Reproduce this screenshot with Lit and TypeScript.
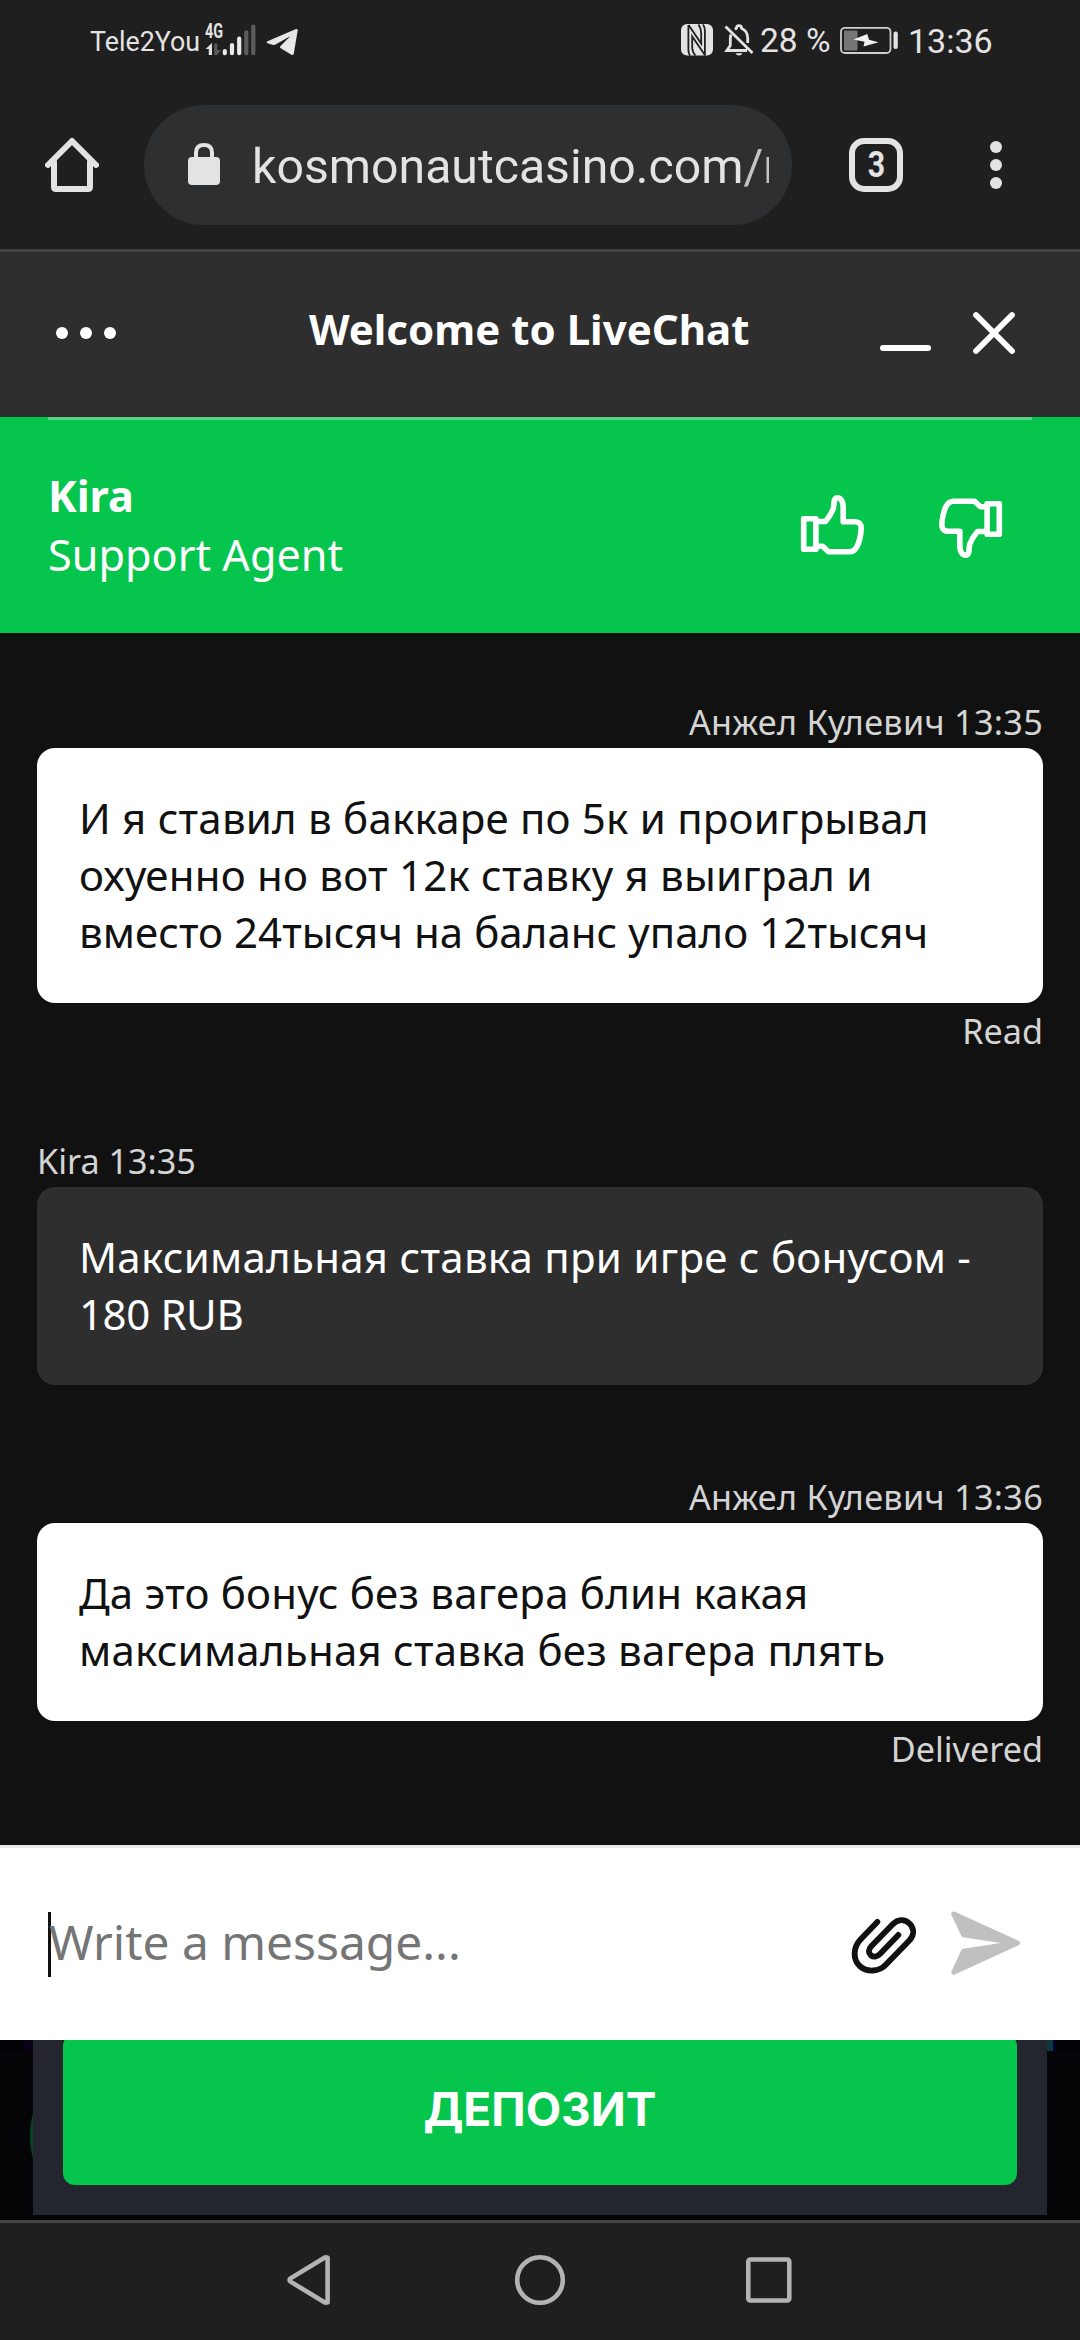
import { LitElement, html, css, svg, nothing } from "lit";
import { customElement, property } from "lit/decorators.js";
import { styleMap } from "lit/directives/style-map.js";

interface Line {
  text: string;
  /** Letter spacing in px. */
  track: number;
}

interface Message {
  own: boolean;
  author: Line;
  lines: Line[];
  status?: string;
}

const MESSAGES: Message[] = [
  {
    own: true,
    author: { text: "Анжел Кулевич 13:35", track: 0.3 },
    lines: [
      { text: "И я ставил в баккаре по 5к и проигрывал", track: 0.21 },
      { text: "охуенно но вот 12к ставку я выиграл и", track: 0.22 },
      { text: "вместо 24тысяч на баланс упало 12тысяч", track: 0.04 },
    ],
    status: "Read",
  },
  {
    own: false,
    author: { text: "Kira 13:35", track: 0 },
    lines: [
      { text: "Максимальная ставка при игре с бонусом -", track: 0.26 },
      { text: "180 RUB", track: -0.4 },
    ],
  },
  {
    own: true,
    author: { text: "Анжел Кулевич 13:36", track: 0.3 },
    lines: [
      { text: "Да это бонус без вагера блин какая", track: 0.23 },
      { text: "максимальная ставка без вагера плять", track: 0.21 },
    ],
    status: "Delivered",
  },
];

const spacing = (line: Line) => styleMap({ letterSpacing: `${line.track}px` });

const thumb = svg`
  <rect x="803.7" y="518.7" width="12.2" height="30.6" />
  <path d="M817 521.5 H825.5 C829 517.5 831.5 513 833 509.5 C834.2 506 833.6 502.5 834.5 500 C835.5 497.4 838.6 497.3 840.3 498.8 C842.3 500.7 843.2 504 843.2 507.5 V521.7 H854 C859.5 521.7 861.5 524.5 861.2 529 C860.8 535.5 859.5 541.5 857 546.5 C855 550.5 852.5 551.8 849.5 551.8 H828.5 L822.6 546.3 H817" />
`;

@customElement("status-bar")
class StatusBar extends LitElement {
  static styles = css`
    :host {
      display: flex;
      height: 90px;
      color: #e3e3e3;
      font-family: Roboto, "Liberation Sans", sans-serif;
      white-space: nowrap;
    }
    .carrier { width: 109px; margin-left: 90px; font-size: 26.8px; line-height: 40px; padding-top: 22px; }
    .network { display: flex; flex-direction: column; width: 18px; margin-left: 6px; padding-top: 22px; }
    .gen { font-size: 20px; line-height: 19px; font-weight: 700; transform: scaleX(0.72); transform-origin: 0 0; }
    .arrows { margin-top: 2px; }
    .signal { margin: 24px 0 0 -1px; }
    .telegram { margin: 28px 0 0 10px; }
    .nfc { margin: 24px 0 0 383px; }
    .bell { margin: 24px 0 0 11px; }
    .percent { width: 72px; margin-left: 6px; font-size: 33.5px; line-height: 40px; padding-top: 21px; }
    .battery { margin: 26px 0 0 8px; }
    .clock { margin-left: 8px; font-size: 34px; line-height: 40px; padding-top: 21px; }
    svg { display: block; flex: none; }
  `;
  render() {
    return html`
      <span class="carrier">Tele2You</span>
      <span class="network">
        <span class="gen">4G</span>
        <svg class="arrows" width="17" height="12" viewBox="205 43 17 12">
          <path d="M212 43 V55 H208.8 V49 H205.6 Z" fill="#e3e3e3" />
          <path d="M214.3 43.5 V55 H217 L220.8 50 H217.2 V43.5 Z" fill="#5c5c5c" />
        </svg>
      </span>
      <svg class="signal" width="34" height="32" viewBox="222 24 34 32" stroke-width="4.2" stroke-linecap="round">
        <path d="M224.8 51.2 V53.2 M232 45 V53.2 M239.2 38.6 V53.2" stroke="#e8e8e8" />
        <path d="M246.3 32.3 V53.2 M253.3 26.6 V53.2" stroke="#5c5c5c" />
      </svg>
      <svg class="telegram" width="32" height="28" viewBox="266 28 32 28">
        <path d="M267.5 41.2 L295.5 29.2 Q298 28.4 297.6 31 L293.8 53.5 Q293.2 56 291 54.6 L280.8 48.3 Q279.5 47.3 280.5 46 L290.5 36 L275.5 44.6 Q274.5 45.2 273 44.9 L267.6 43.3 Q265.8 42.3 267.5 41.2 Z" fill="#e8e8e8" />
      </svg>
      <svg class="nfc" width="32" height="32" viewBox="681 24 32 32">
        <rect x="681" y="24" width="32" height="31.5" rx="6" fill="#e3e3e3" />
        <path d="M688.6 25 L701.2 43.5 V33 Q701.2 28.5 698.5 24.5 M705.2 55.5 L692.2 36.5 V47 Q692.2 52 695.5 55.5 M688.4 25 V50 Q688.4 53 690 55.5 M704.9 55 V31 Q704.9 27 703 24.5" fill="none" stroke="#1f1f1f" stroke-width="1.8" />
      </svg>
      <svg class="bell" width="30" height="32" viewBox="724 24 30 32" fill="none" stroke="#e3e3e3" stroke-width="2.8">
        <path d="M731 34.5 Q730.3 36.5 730.3 39 V45.5 L726.8 50.5 H747 M735 29.5 Q736 28.6 736.5 28.2 Q736.5 25.6 739 25.6 Q741.5 25.6 741.5 28.2 Q747.7 31 747.7 38 V43" />
        <path d="M725.5 26.5 L752.5 53" />
        <path d="M735.5 53.2 H742.5 Q741.5 55.6 739 55.6 Q736.5 55.6 735.5 53.2 Z" fill="#e3e3e3" stroke="none" />
      </svg>
      <span class="percent">28 %</span>
      <svg class="battery" width="60" height="28" viewBox="840 26 60 28">
        <rect x="841" y="27.8" width="49.5" height="25.2" rx="4" fill="none" stroke="#cfcfcf" stroke-width="1.8" />
        <rect x="844" y="30.5" width="13.5" height="20" rx="1" fill="#767676" />
        <path d="M853.5 39.5 L864.5 41.8 L863.5 46.5 L878.5 42.2 L869 39.8 L867.3 34 Z" fill="#f2f2f2" />
        <rect x="893.5" y="31.5" width="4.3" height="17.5" rx="2" fill="#e3e3e3" />
      </svg>
      <span class="clock">13:36</span>
    `;
  }
}

@customElement("browser-bar")
class BrowserBar extends LitElement {
  static styles = css`
    :host {
      display: flex;
      align-items: flex-start;
      box-sizing: border-box;
      height: 162px;
      border-bottom: 3px solid #434343;
      color: #e3e3e3;
      font-family: Roboto, "Liberation Sans", sans-serif;
    }
    svg { display: block; flex: none; }
    .home { margin: 47px 0 0 45px; }
    .address {
      display: flex;
      box-sizing: border-box;
      width: 648px;
      height: 120px;
      margin: 15px 0 0 45px;
      padding-left: 44px;
      border-radius: 60px;
      background: #2e2f31;
    }
    .lock { margin: 38px 0 0; }
    .url {
      width: 517px;
      margin: 32px 0 0 32px;
      overflow: hidden;
      white-space: nowrap;
      font-size: 48.2px;
      line-height: 60px;
    }
    .path { color: #c4c4c4; }
    .tabs {
      display: flex;
      align-items: center;
      justify-content: center;
      box-sizing: border-box;
      width: 54px;
      height: 54px;
      margin: 48px 0 0 57px;
      border: 6px solid #e3e3e3;
      border-radius: 15px;
    }
    .count { font-size: 36px; font-weight: 700; line-height: 40px; transform: scaleX(0.84); }
    .menu { margin: 50px 0 0 87px; }
  `;
  render() {
    return html`
      <svg class="home" width="54" height="56" viewBox="45 137 54 56" fill="none" stroke="#e3e3e3" stroke-width="6" stroke-linecap="round" stroke-linejoin="round">
        <path d="M48 165 L72 141 L96 165" />
        <path d="M54 162 V187 Q54 189 56 189 H88 Q90 189 90 187 V162" />
      </svg>
      <div class="address">
        <svg class="lock" width="32" height="42" viewBox="188 143 32 42">
          <rect x="188" y="157" width="32" height="28" rx="4" fill="#e3e3e3" />
          <path d="M196 159 V152.5 Q196 145 204 145 Q212 145 212 152.5 V159" fill="none" stroke="#e3e3e3" stroke-width="4" />
        </svg>
        <div class="url">kosmonautcasino.com<span class="path">/r</span></div>
      </div>
      <div class="tabs"><span class="count">3</span></div>
      <svg class="menu" width="12" height="50" viewBox="990 140 12 50" fill="#e3e3e3">
        <circle cx="996" cy="147" r="6" /><circle cx="996" cy="165" r="6" /><circle cx="996" cy="183" r="6" />
      </svg>
    `;
  }
}

@customElement("chat-header")
class ChatHeader extends LitElement {
  static styles = css`
    :host { display: block; color: #fff; font-family: "Noto Sans", "Open Sans", sans-serif; font-size: 42px; }
    svg { display: block; flex: none; }
    .bar { display: flex; height: 165px; background: #2e2e2e; }
    .dots { margin: 75px 0 0 56px; }
    .title { width: 444px; margin: 48px 0 0 193px; font-weight: 700; line-height: 57px; white-space: nowrap; }
    .min { margin: 93px 0 0 127px; }
    .close { margin: 59px 0 0 41px; }
    .agent { display: flex; box-sizing: border-box; height: 216px; padding: 0 48px; background: #06c54d; }
    .inner { display: flex; flex: 1; box-sizing: border-box; border-top: 3px solid #5dd389; }
    .who { flex: 1; margin-top: 46px; line-height: 59px; font-size: 43.2px; }
    .name { font-weight: 700; }
    .up { margin: 73px 73px 0 0; }
    .down { margin: 76px 29px 0 0; }
  `;
  render() {
    return html`
      <div class="bar">
        <svg class="dots" width="60" height="12" viewBox="56 327 60 12" fill="#fff">
          <circle cx="62" cy="333" r="6" /><circle cx="86" cy="333" r="6" /><circle cx="110" cy="333" r="6" />
        </svg>
        <div class="title">Welcome to LiveChat</div>
        <svg class="min" width="51" height="6" viewBox="0 0 51 6"><rect width="51" height="6" rx="3" fill="#fff" /></svg>
        <svg class="close" width="44" height="44" viewBox="972 311 44 44" stroke="#fff" stroke-width="5.8" stroke-linecap="round">
          <path d="M976 315 L1012 351 M1012 315 L976 351" />
        </svg>
      </div>
      <div class="agent">
        <div class="inner">
          <div class="who"><div class="name">Kira</div><div>Support Agent</div></div>
          <svg class="up" width="65" height="64" viewBox="800 493 65 64" fill="none" stroke="#fff" stroke-width="5.6" stroke-linejoin="round">${thumb}</svg>
          <svg class="down" width="65" height="64" viewBox="938 496 65 64" fill="none" stroke="#fff" stroke-width="5.6" stroke-linejoin="round">
            <g transform="translate(1803 1053) rotate(180)">${thumb}</g>
          </svg>
        </div>
      </div>
    `;
  }
}

@customElement("chat-message")
class ChatMessage extends LitElement {
  @property({ attribute: false }) message!: Message;
  static styles = css`
    :host { display: block; color: #d4d4d4; font-family: "Noto Sans", "Open Sans", sans-serif; }
    .meta { padding-top: 1px; font-size: 34.2px; line-height: 48px; white-space: nowrap; }
    .own .meta { text-align: right; }
    .bubble {
      margin: 2px 0 3px;
      padding: 41px 42px 43px;
      border-radius: 18px;
      background: #2e2e2e;
      color: #fff;
      font-size: 42px;
      line-height: 57px;
      white-space: nowrap;
    }
    .own .bubble { background: #fff; color: #111; }
  `;
  render() {
    const m = this.message;
    return html`
      <div class=${m.own ? "own" : "other"}>
        <div class="meta" style=${spacing(m.author)}>${m.author.text}</div>
        <div class="bubble">${m.lines.map((l) => html`<div style=${spacing(l)}>${l.text}</div>`)}</div>
        ${m.status ? html`<div class="meta">${m.status}</div>` : nothing}
      </div>
    `;
  }
}

@customElement("message-input")
class MessageInput extends LitElement {
  static styles = css`
    :host {
      display: flex;
      box-sizing: border-box;
      height: 195px;
      border-top: 3px solid #e7e7e7;
      background: #fff;
      font-family: "Noto Sans", "Open Sans", sans-serif;
    }
    svg { display: block; flex: none; }
    .caret { width: 3px; height: 65px; margin: 64px 0 0 48px; background: #111; }
    .placeholder { flex: 1; margin: 62px 0 0 -2px; color: #757575; font-size: 47.9px; line-height: 64px; }
    .clip { margin: 68px 34px 0 0; }
    .send { margin: 62px 58px 0 0; }
  `;
  render() {
    return html`
      <div class="caret"></div>
      <div class="placeholder">Write a message...</div>
      <svg class="clip" width="66" height="60" viewBox="851 1916 66 60" fill="none" stroke="#111" stroke-width="5.9" stroke-linecap="round" stroke-linejoin="round">
        <path d="M877.3 1922 L860.5 1939.5 C852.5 1948 853 1960 860 1966.3 C867 1972.5 879 1972 886 1964.5 L909.8 1940 C914.5 1934.5 914 1928 909.5 1923.5 C905 1918.8 897.5 1918.8 892.5 1924.5 L871.5 1946 C868 1949.5 868.3 1953 870.8 1955.2 C873.5 1957.5 877 1957 880 1954 L898.3 1935" />
      </svg>
      <svg class="send" width="71" height="66" viewBox="951 1911 71 66" fill="#c0c0c0" stroke="#c0c0c0" stroke-width="5" stroke-linejoin="round">
        <path d="M953.8 1915 L1017.5 1944 L953.8 1973.2 L963.5 1952.3 L1017.5 1944 L963.5 1935.7 Z" />
      </svg>
    `;
  }
}

@customElement("deposit-panel")
class DepositPanel extends LitElement {
  static styles = css`
    :host { display: flex; justify-content: space-between; height: 180px; background: #050507; overflow: hidden; }
    .side { width: 33px; overflow: hidden; }
    .side svg { display: block; }
    .panel { width: 1014px; height: 175px; background: #23262f; }
    .deposit {
      display: block;
      width: 954px;
      height: 151px;
      margin: -6px auto 0;
      padding: 0 0 2px;
      border: 0;
      border-radius: 12px;
      background: #06c54d;
      color: #fff;
      font: 700 46px/144px Inter, "Open Sans", sans-serif;
    }
  `;
  render() {
    return html`
      <div class="side">
        <svg width="33" height="180" viewBox="0 0 33 180">
          <rect width="33" height="12" fill="#020106" />
          <rect x="24" width="9" height="12" fill="#0c0017" />
          <ellipse cx="42" cy="96" rx="12" ry="34" fill="#07441e" />
        </svg>
      </div>
      <div class="panel"><button class="deposit">ДЕПОЗИТ</button></div>
      <div class="side">
        <svg width="33" height="180" viewBox="0 0 33 180">
          <rect width="33" height="12" fill="#020106" />
          <rect width="6" height="11" fill="#0b3a3c" />
          <rect x="6" width="3" height="12" fill="#02022e" />
        </svg>
      </div>
    `;
  }
}

@customElement("app-root")
class AppRoot extends LitElement {
  static styles = css`
    :host { display: flex; flex-direction: column; width: 1080px; height: 2340px; background: #1f1f1f; overflow: hidden; }
    .chat { box-sizing: border-box; height: 1212px; padding: 64px 37px 0; background: #111; }
    .message { margin-bottom: 81px; }
    .message:nth-child(2) { margin-bottom: 87px; }
    .nav {
      display: flex;
      align-items: center;
      justify-content: center;
      gap: 177px;
      box-sizing: border-box;
      height: 120px;
      padding-bottom: 3px;
      border-top: 3px solid #434343;
    }
    .key { display: block; width: 52px; height: 54px; fill: none; stroke: #b3b3b3; stroke-width: 4.6; stroke-linejoin: round; }
  `;
  render() {
    return html`
      <status-bar></status-bar>
      <browser-bar></browser-bar>
      <chat-header></chat-header>
      <div class="chat">
        ${MESSAGES.map((m) => html`<chat-message class="message" .message=${m}></chat-message>`)}
      </div>
      <message-input></message-input>
      <deposit-panel></deposit-panel>
      <div class="nav">
        <svg class="key" viewBox="285 2253 52 54"><path d="M327.6 2257.6 V2302.4 Q325.5 2303 324 2302 L290.5 2281.6 Q288.5 2280 290.5 2278.4 L324 2258 Q325.5 2257 327.6 2257.6 Z" /></svg>
        <svg class="key" viewBox="514 2253 52 54"><circle cx="540" cy="2280" r="22.8" /></svg>
        <svg class="key" viewBox="743 2253 52 54"><rect x="748.3" y="2259.5" width="41" height="41" rx="2" /></svg>
      </div>
    `;
  }
}
